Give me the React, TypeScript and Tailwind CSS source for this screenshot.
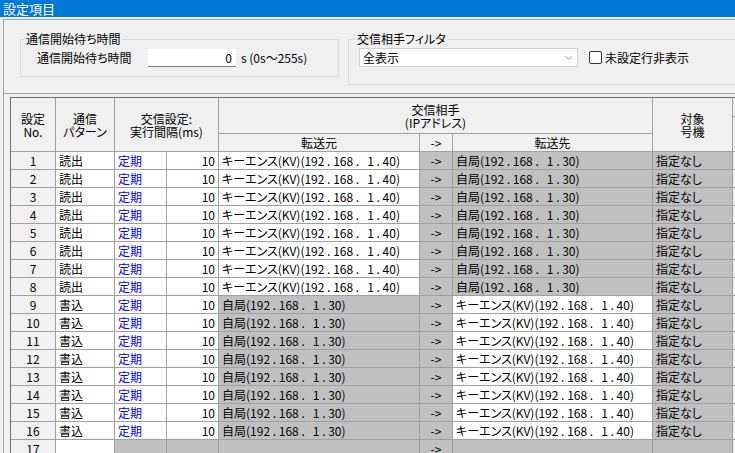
import { ChevronDown } from "lucide-react"

const KV = "キーエンス(KV)(192 . 168 .   1 . 40)"
const SELF = "自局(192 . 168 .   1 . 30)"

const cell = "border-r border-b border-[#a0a0a0] whitespace-pre overflow-hidden leading-[17px]"
const head = "border-r border-b border-[#a0a0a0] flex flex-col items-center justify-center text-center leading-[13px] whitespace-nowrap"

function DataRow({ no }: { no: number }) {
  const read = no <= 8
  return (
    <>
      <div className={`${cell} bg-[#f0f0f0] text-center`}>{no}</div>
      <div className={`${cell} bg-white pl-[3px]`}>{read ? "読出" : "書込"}</div>
      <div className={`${cell} bg-white pl-[3px] text-[#0000ff]`}>定期</div>
      <div className={`${cell} bg-white pr-[3px] text-right`}>10</div>
      {read ? (
        <div className={`${cell} bg-white pl-[3px]`}>{KV}</div>
      ) : (
        <div className={`${cell} bg-[#c0c0c0] pl-[3px]`}>{SELF}</div>
      )}
      <div className={`${cell} bg-[#c0c0c0] text-center`}>-&gt;</div>
      {read ? (
        <div className={`${cell} bg-[#c0c0c0] pl-[3px]`}>{SELF}</div>
      ) : (
        <div className={`${cell} bg-white pl-[3px]`}>{KV}</div>
      )}
      <div className={`${cell} bg-[#c0c0c0] pl-[3px]`}>指定なし</div>
      <div className={`${cell} bg-[#f0f0f0]`} />
    </>
  )
}

export default function App() {
  const rows = Array.from({ length: 16 }, (_, i) => i + 1)

  return (
    <div className="w-[735px] h-[453px] overflow-hidden bg-[#f0f0f0] text-[12px] text-black font-['Noto_Sans_CJK_JP',sans-serif] [font-feature-settings:'palt']">
      {/* Title */}
      <div className="h-[17px] bg-[#0078d7] pl-[3px] text-[13px] leading-[17px] text-white">設定項目</div>

      <div className="ml-[3px] mt-[2px] h-[434px] border-l border-t border-[#a0a0a0]">
        {/* Filters */}
        <div className="flex h-[74px] items-start gap-[9px] border-b border-[#a0a0a0] pl-[16px] pt-[12px]">
          <fieldset className="h-[45px] w-[319px] shrink-0 border border-[#dcdcdc]">
            <legend className="ml-[4px] px-[1px] leading-[14px]">通信開始待ち時間</legend>
            <div className="flex items-center pl-[16px] pt-[3px]">
              <span className="w-[111px] leading-[18px]">通信開始待ち時間</span>
              <div className="h-[18px] w-[88px] border-b border-[#808080] bg-white pr-[4px] text-right leading-[17px]">0</div>
              <span className="ml-[5px] leading-[18px]">s (0s〜255s)</span>
            </div>
          </fieldset>

          <fieldset className="h-[53px] w-[420px] shrink-0 border border-[#dcdcdc]">
            <legend className="ml-[7px] px-[1px] leading-[14px]">交信相手フィルタ</legend>
            <div className="flex items-center pl-[10px] pt-[2px]">
              <div className="flex h-[19px] w-[219px] items-center justify-between border border-[#d0d0d0] bg-white pl-[3px] pr-[2px]">
                <span className="leading-[17px]">全表示</span>
                <ChevronDown className="h-[12px] w-[12px] text-[#707070]" strokeWidth={1.5} />
              </div>
              <div className="ml-[11px] h-[13px] w-[13px] rounded-[2px] border border-[#333333] bg-white" />
              <span className="ml-[3px] leading-[18px]">未設定行非表示</span>
            </div>
          </fieldset>
        </div>

        {/* Grid */}
        <div className="ml-[6px] mt-[3px] grid grid-cols-[45px_59px_52px_52px_201px_33px_200px_80px_60px] grid-rows-[36px_18px_repeat(17,18px)] border-l border-t border-[#707070]">
          <div className={`${head} row-span-2`}>
            <span>設定</span>
            <span>No.</span>
          </div>
          <div className={`${head} row-span-2`}>
            <span>通信</span>
            <span>パターン</span>
          </div>
          <div className={`${head} col-span-2 row-span-2`}>
            <span>交信設定:</span>
            <span>実行間隔(ms)</span>
          </div>
          <div className={`${head} col-span-3`}>
            <span>交信相手</span>
            <span>(IPアドレス)</span>
          </div>
          <div className={`${head} row-span-2`}>
            <span>対象</span>
            <span>号機</span>
          </div>
          <div className="row-span-2 border-r border-b border-[#a0a0a0]">
            <div className="h-[19px] border-b border-[#a0a0a0]" />
          </div>
          <div className={head}>転送元</div>
          <div className={head}>-&gt;</div>
          <div className={head}>転送先</div>

          {rows.map((n) => (
            <DataRow key={n} no={n} />
          ))}

          <div className={`${cell} bg-[#f0f0f0] text-center`}>17</div>
          <div className={`${cell} bg-white`} />
          <div className={`${cell} bg-[#c0c0c0]`} />
          <div className={`${cell} bg-[#c0c0c0]`} />
          <div className={`${cell} bg-[#c0c0c0]`} />
          <div className={`${cell} bg-[#c0c0c0] text-center`}>-&gt;</div>
          <div className={`${cell} bg-[#c0c0c0]`} />
          <div className={`${cell} bg-[#c0c0c0]`} />
          <div className={`${cell} bg-[#f0f0f0]`} />
        </div>
      </div>
    </div>
  )
}
